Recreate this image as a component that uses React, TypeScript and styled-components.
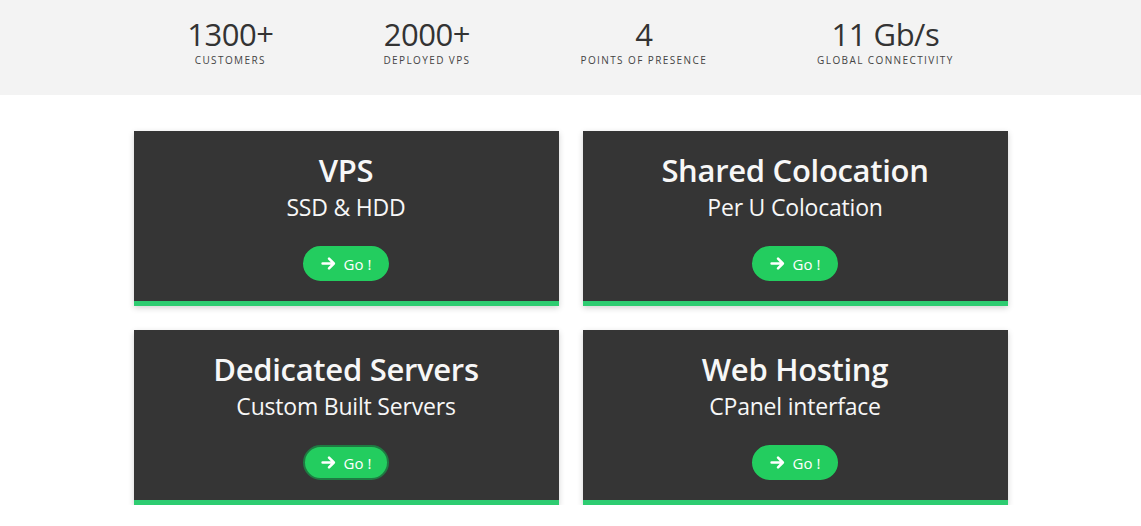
import styled, { createGlobalStyle } from "styled-components";

const GlobalStyle = createGlobalStyle`
  body {
    margin: 0;
    background: #ffffff;
    font-family: "Open Sans", "Noto Sans", "Liberation Sans", sans-serif;
  }
`;

const StatsBand = styled.section`
  background-color: #f3f3f3;
  height: 95px;
  display: flex;
  justify-content: center;
  align-items: flex-start;
  gap: 110px;
  padding-top: 18px;
  box-sizing: border-box;
`;

const Stat = styled.div`
  display: flex;
  flex-direction: column;
  align-items: center;
  color: #333;
`;

const StatValue = styled.span`
  font-size: 31px;
  line-height: 33px;
  font-weight: 400;
  letter-spacing: -0.5px;
`;

const StatLabel = styled.span`
  margin-top: 3px;
  font-size: 10px;
  line-height: 12px;
  letter-spacing: 1.4px;
  text-transform: uppercase;
  color: #444;
`;

const Grid = styled.main`
  width: 874px;
  margin: 36px auto 0;
  display: grid;
  grid-template-columns: repeat(2, 1fr);
  gap: 24px;
`;

const Card = styled.div`
  background-color: #353535;
  border-bottom: 5px solid #2ecc71;
  height: 175px;
  box-sizing: border-box;
  box-shadow: 0 2px 6px rgba(0, 0, 0, 0.18);
  display: flex;
  flex-direction: column;
  align-items: center;
  padding-top: 18px;
  color: #f7f7f7;
`;

const Title = styled.h2`
  margin: 0;
  font-size: 31px;
  line-height: 42px;
  font-weight: 600;
  letter-spacing: -0.3px;
`;

const Subtitle = styled.p`
  margin: 0;
  font-size: 23px;
  line-height: 32px;
  font-weight: 400;
  letter-spacing: -0.2px;
`;

const GoButton = styled.a<{ focused?: boolean }>`
  margin-top: 23px;
  width: 86px;
  height: 35px;
  box-sizing: border-box;
  border-radius: 18px;
  background-color: #23cd5f;
  border: 2px solid ${(p) => (p.focused ? "#1f7a42" : "#23cd5f")};
  color: #fff;
  display: flex;
  align-items: center;
  justify-content: center;
  gap: 8px;
  font-size: 15px;
  text-decoration: none;
  cursor: pointer;
  svg {
    display: block;
  }
`;

const ArrowIcon = () => (
  <svg width="15" height="15" viewBox="0 0 14 14" fill="none">
    <path
      d="M1.5 7h10M7.5 2.5 12 7l-4.5 4.5"
      stroke="#fff"
      strokeWidth="2.4"
      strokeLinecap="round"
      strokeLinejoin="round"
    />
  </svg>
);

const stats = [
  { value: "1300+", label: "Customers" },
  { value: "2000+", label: "Deployed VPS" },
  { value: "4", label: "Points of presence" },
  { value: "11 Gb/s", label: "Global connectivity" },
];

const services = [
  { title: "VPS", subtitle: "SSD & HDD" },
  { title: "Shared Colocation", subtitle: "Per U Colocation" },
  { title: "Dedicated Servers", subtitle: "Custom Built Servers", focused: true },
  { title: "Web Hosting", subtitle: "CPanel interface" },
];

function App() {
  return (
    <>
      <GlobalStyle />
      <StatsBand>
        {stats.map((s) => (
          <Stat key={s.label}>
            <StatValue>{s.value}</StatValue>
            <StatLabel>{s.label}</StatLabel>
          </Stat>
        ))}
      </StatsBand>
      <Grid>
        {services.map((s) => (
          <Card key={s.title}>
            <Title>{s.title}</Title>
            <Subtitle>{s.subtitle}</Subtitle>
            <GoButton focused={s.focused}>
              <ArrowIcon />
              Go !
            </GoButton>
          </Card>
        ))}
      </Grid>
    </>
  );
}

export default App;
